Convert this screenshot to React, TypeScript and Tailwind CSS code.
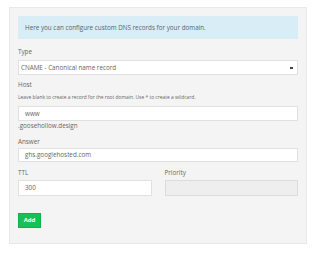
// App.tsx
function Label({ children, className = '' }: { children: React.ReactNode; className?: string }) {
  return <div className={`h-[10px] text-[6.3px] leading-[10px] text-[#666] ${className}`}>{children}</div>;
}

export default function App() {
  return (
    <div className="min-h-screen bg-white pl-[9px] pr-[13px] pt-[7px] font-['Open_Sans',sans-serif]">
      <div className="border border-[#e8e8e8] bg-[#f4f4f4] px-[8px] pb-[15px] pt-[8px]">
        <div className="flex h-[23px] items-center bg-[#d9edf7] px-[7px] text-[6.3px] text-[#56646e]">
          Here you can configure custom DNS records for your domain.
        </div>

        <Label className="mt-[8px]">Type</Label>
        <div className="mt-[3px] flex h-[15px] items-center justify-between border border-[#e0e0e0] bg-white pl-[2px] pr-[4px] text-[6.3px] text-[#666]">
          <span>CNAME - Canonical name record</span>
          <span className="h-[2px] w-[3px] bg-[#444]" />
        </div>

        <Label className="mt-[5px]">Host</Label>
        <div className="mt-[3px] h-[8px] text-[4.9px] leading-[8px] text-[#666]">
          Leave blank to create a record for the root domain. Use * to create a wildcard.
        </div>
        <div className="mt-[5px] flex h-[15px] items-center border border-[#e0e0e0] bg-white pl-[6px] text-[6.3px] text-[#666]">
          www
        </div>
        <div className="mt-px h-[8px] text-[6.3px] leading-[8px] text-[#666]">.goosehollow.design</div>

        <Label className="mt-[7px]">Answer</Label>
        <div className="mt-px flex h-[14px] items-center border border-[#e0e0e0] bg-white pl-[6px] text-[6.3px] text-[#666]">
          ghs.googlehosted.com
        </div>

        <div className="mt-[6px] grid grid-cols-2 gap-x-[13px]">
          <div>
            <Label>TTL</Label>
            <div className="mt-[2px] flex h-[16px] items-center border border-[#e0e0e0] bg-white pl-[6px] text-[6.3px] text-[#666]">
              300
            </div>
          </div>
          <div>
            <Label>Priority</Label>
            <div className="mt-[2px] h-[16px] border border-[#dcdcdc] bg-[#eeeeee]" />
          </div>
        </div>

        <button className="mt-[17px] flex h-[15px] w-[23px] items-center justify-center border border-[#12b04e] bg-[#17bf57] text-[6px] font-bold text-white">
          Add
        </button>
      </div>
    </div>
  );
}
